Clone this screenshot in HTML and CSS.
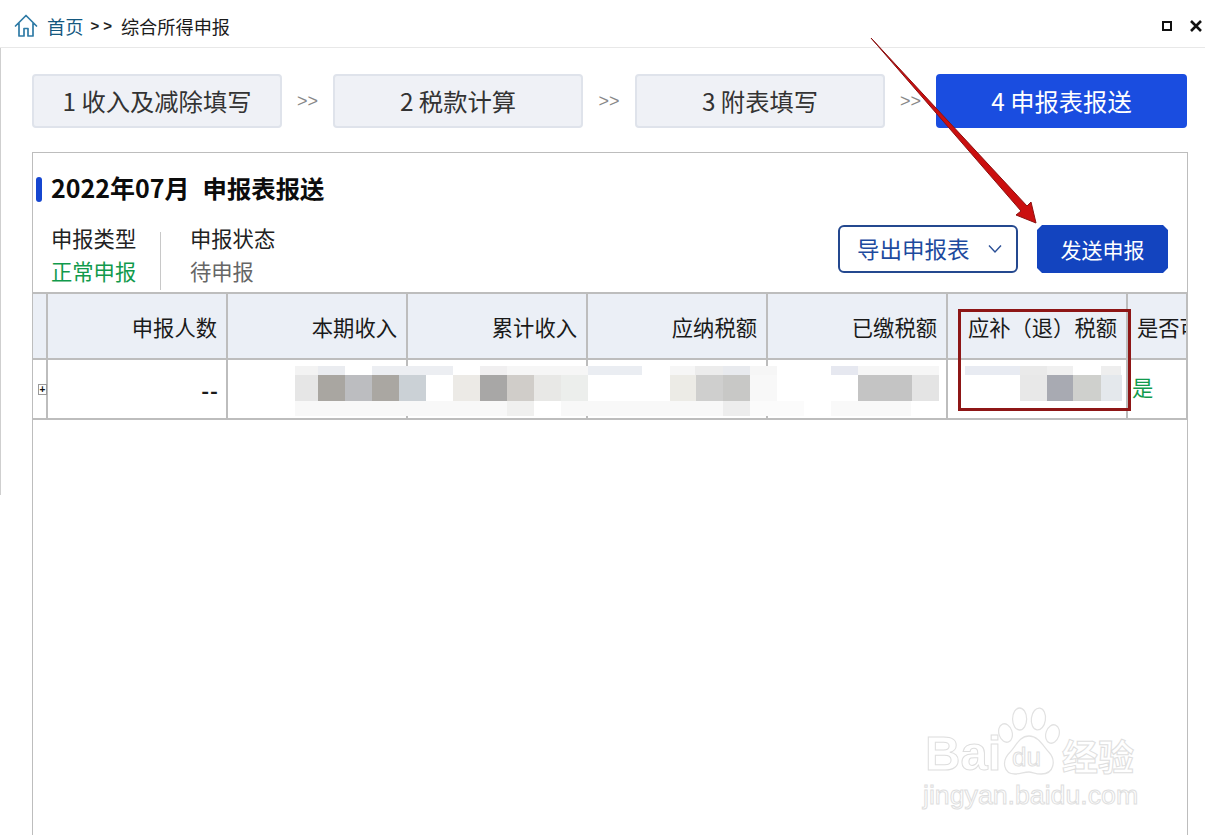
FILE: index.html
```html
<!DOCTYPE html>
<html lang="zh-CN">
<head>
<meta charset="utf-8">
<title>综合所得申报</title>
<link rel="stylesheet" href="styles.css">
</head>
<body>
<div class="app">
  <header class="topbar">
    <div class="crumbs">
      <svg class="home" viewBox="0 0 24 24" width="24" height="24"><path d="M1.5 12 L12 1.5 L22.5 12 M5 9.5 V22 H10 V14.5 H14 V22 H19 V9.5" fill="none" stroke="#2f7ba6" stroke-width="1.7" stroke-linejoin="round" stroke-linecap="round"/></svg>
      <a class="crumb-link">首页</a>
      <span class="crumb-sep">&gt;&gt;</span>
      <span class="crumb-now">综合所得申报</span>
    </div>
    <div class="winctl">
      <span class="win-max"></span>
      <svg class="win-close" viewBox="0 0 14 14" width="14" height="14"><path d="M2 2 L12 12 M12 2 L2 12" stroke="#111" stroke-width="2.6"/></svg>
    </div>
  </header>

  <main class="content">
    <nav class="steps">
      <div class="step">1 收入及减除填写</div>
      <div class="step-sep">&gt;&gt;</div>
      <div class="step">2 税款计算</div>
      <div class="step-sep step-sep-wide">&gt;&gt;</div>
      <div class="step">3 附表填写</div>
      <div class="step-sep">&gt;&gt;</div>
      <div class="step step-active">4 申报表报送</div>
    </nav>

    <section class="panel">
      <h1 class="title"><span class="title-bar"></span><span class="title-date">2022年07月</span><span class="title-name">申报表报送</span></h1>
      <div class="info">
        <div class="meta">
          <div class="meta-item meta-first">
            <div class="meta-label">申报类型</div>
            <div class="meta-value value-green">正常申报</div>
          </div>
          <div class="meta-item">
            <div class="meta-label">申报状态</div>
            <div class="meta-value value-gray">待申报</div>
          </div>
        </div>
        <div class="actions">
          <button class="btn-export"><span class="btn-export-text">导出申报表</span>
            <svg viewBox="0 0 14 10" width="14" height="10"><path d="M1 1.5 L7 8 L13 1.5" fill="none" stroke="#2a4f96" stroke-width="1.4"/></svg>
          </button>
          <button class="btn-send">发送申报</button>
        </div>
      </div>
      <table class="grid">
        <colgroup>
          <col class="col-exp"><col class="col-num"><col class="col-num"><col class="col-num"><col class="col-num"><col class="col-num"><col class="col-num"><col class="col-last">
        </colgroup>
        <thead>
          <tr>
            <th></th><th>申报人数</th><th>本期收入</th><th>累计收入</th><th>应纳税额</th><th>已缴税额</th><th>应补（退）税额</th><th class="cell-left"><span class="clip">是否可</span></th>
          </tr>
        </thead>
        <tbody>
          <tr>
            <td class="cell-exp"><span class="expander">+</span></td><td><span class="dash">--</span></td><td></td><td></td><td></td><td></td><td></td><td class="cell-yes">是</td>
          </tr>
        </tbody>
      </table>
    </section>
  </main>

  <svg class="overlay" viewBox="0 0 1205 835" width="1205" height="835">
    <g fill="#f8f8f8">
      <rect x="295" y="401" width="212" height="15"/><rect x="507" y="401" width="27" height="15" fill="#f0f0ef"/><rect x="561" y="401" width="27" height="15"/>
      <rect x="588" y="401" width="135" height="15"/><rect x="723" y="401" width="27" height="15" fill="#ededed"/><rect x="750" y="401" width="54" height="15" fill="#fbfbfb"/>
      <rect x="831" y="401" width="80" height="15" fill="#f9f9f9"/>
    </g>
    <g fill="#f3f3f3">
      <rect x="295" y="366" width="23" height="9"/><rect x="318" y="366" width="27" height="9" fill="#eaecf0"/><rect x="372" y="366" width="81" height="9" fill="#eceef2"/>
      <rect x="480" y="366" width="27" height="9" fill="#f0eff0"/><rect x="507" y="366" width="81" height="9" fill="#f6f6f6"/>
      <rect x="588" y="366" width="54" height="9" fill="#eaedf2"/><rect x="670" y="366" width="25" height="9" fill="#f6f6f6"/><rect x="695" y="366" width="28" height="9" fill="#ececec"/><rect x="723" y="366" width="27" height="9" fill="#e8eaee"/><rect x="750" y="366" width="27" height="9" fill="#f6f6f6"/>
      <rect x="831" y="366" width="27" height="9" fill="#e6e8f0"/><rect x="858" y="366" width="81" height="9" fill="#f6f6f6"/>
      <rect x="965" y="366" width="55" height="9" fill="#e8ebf2"/><rect x="1020" y="366" width="27" height="9" fill="#eaeaea"/><rect x="1047" y="366" width="26" height="9" fill="#f0f0f0"/><rect x="1101" y="366" width="20" height="9" fill="#eeeeee"/>
    </g>
    <g>
      <rect x="295" y="375" width="23" height="26" fill="#e6e6e6"/><rect x="318" y="375" width="27" height="26" fill="#a9a6a1"/><rect x="345" y="375" width="27" height="26" fill="#bcbdc0"/><rect x="372" y="375" width="27" height="26" fill="#aaa7a2"/><rect x="399" y="375" width="27" height="26" fill="#cbd1d6"/>
      <rect x="453" y="375" width="27" height="26" fill="#eceae6"/><rect x="480" y="375" width="27" height="26" fill="#a8a7a6"/><rect x="507" y="375" width="27" height="26" fill="#d0cdc9"/><rect x="534" y="375" width="27" height="26" fill="#e8e8e6"/><rect x="561" y="375" width="27" height="26" fill="#eceeec"/>
      <rect x="670" y="375" width="26" height="26" fill="#ecebe6"/><rect x="696" y="375" width="27" height="26" fill="#cfcfce"/><rect x="723" y="375" width="27" height="26" fill="#c8c8c6"/><rect x="750" y="375" width="27" height="26" fill="#f8f8f8"/>
      <rect x="858" y="375" width="54" height="26" fill="#c4c4c4"/><rect x="912" y="375" width="27" height="26" fill="#e4e4e4"/>
      <rect x="1020" y="375" width="27" height="26" fill="#e8e8e8"/><rect x="1047" y="375" width="26" height="26" fill="#a8aab2"/><rect x="1073" y="375" width="28" height="26" fill="#cfd0cd"/><rect x="1101" y="375" width="21" height="26" fill="#e4e8ec"/>
    </g>
    <rect x="959.5" y="310.5" width="170" height="99" fill="none" stroke="#8e1616" stroke-width="3"/>
    <path d="M871 38 L1027 206 L1031 202 L1036 223 L1016 215 L1021 211 Z" fill="#cb0f0f" stroke="#8a1212" stroke-width="1" stroke-linejoin="round"/>
  </svg>

  <div class="watermark">
    <div class="wm-top">
      <span class="wm-bai">Bai</span>
      <span class="wm-paw">
        <svg viewBox="0 0 66 72" width="62" height="72" preserveAspectRatio="none">
          <g fill="#fff" stroke="#e2e2e2" stroke-width="1.3">
            <ellipse cx="8" cy="27" rx="7" ry="9.5" transform="rotate(-20 8 27)"/>
            <ellipse cx="23" cy="13" rx="7.5" ry="11"/>
            <ellipse cx="43" cy="13" rx="7.5" ry="11" transform="rotate(8 43 13)"/>
            <ellipse cx="58" cy="28" rx="7" ry="9.5" transform="rotate(20 58 28)"/>
            <path d="M33 30 C43 30 48 40 54 46 C62 54 60 68 46 68 C39 68 37 66 33 66 C27 66 25 68 18 68 C6 68 3 55 13 46 C19 40 23 30 33 30 Z"/>
          </g>
        </svg>
        <span class="wm-du">du</span>
      </span>
      <span class="wm-cn">经验</span>
    </div>
    <div class="wm-url">jingyan.baidu.com</div>
  </div>
</div>
</body>
</html>
```

FILE: styles.css
```css
* { box-sizing: border-box; }
html, body { margin: 0; padding: 0; background: #fff; }
body { font-family: "Noto Sans CJK SC", "Liberation Sans", sans-serif; color: #222; }

.app {
  position: relative;
  width: 1205px;
  height: 835px;
  overflow: hidden;
  display: flex;
  flex-direction: column;
}
.app::before {
  content: "";
  position: absolute;
  left: 0;
  top: 48px;
  width: 1px;
  height: 447px;
  background: #cfcfcf;
}

.topbar {
  height: 48px;
  flex: none;
  display: flex;
  align-items: center;
  justify-content: space-between;
  padding: 5px 2px 0 14px;
  border-bottom: 1px solid #e8e8e8;
}
.crumbs { display: flex; align-items: center; font-size: 18.2px; line-height: 24px; }
.home { margin-right: 9px; }
.crumb-link { color: #14587f; }
.crumb-sep { margin: 0 5px 0 7px; font-family: "Liberation Sans", sans-serif; font-weight: 700; font-size: 15px; letter-spacing: 4px; color: #222; }
.crumb-now { color: #1b1b1b; }
.winctl { display: flex; align-items: center; gap: 17px; }
.win-max { width: 10px; height: 10px; border: 2px solid #111; }

.content { flex: 1; display: flex; flex-direction: column; padding: 26px 17px 0 32px; min-height: 0; }

.steps { display: flex; height: 54px; flex: none; }
.step {
  width: 250px;
  display: flex;
  align-items: center;
  justify-content: center;
  padding-bottom: 2px;
  background: #eff1f6;
  border: 2px solid #dfe3eb;
  border-radius: 4px;
  font-size: 24.3px;
  color: #333;
}
.step-active { width: 251px; background: #1a4de0; border-color: #1a4de0; color: #fff; }
.step-sep {
  width: 51px;
  display: flex;
  align-items: center;
  justify-content: center;
  font-family: "Liberation Sans", sans-serif;
  font-size: 18px;
  color: #888;
}
.step-sep-wide { width: 52px; }

.panel {
  flex: 1;
  margin-top: 24px;
  border: 1px solid #bdbdbd;
  border-bottom: 0;
  min-height: 0;
  overflow: hidden;
}
.title {
  margin: 23px 0 0;
  height: 26px;
  display: flex;
  align-items: center;
  padding-left: 3px;
  font-weight: 700;
  color: #0c0c0c;
  white-space: nowrap;
}
.title-bar { width: 6px; height: 25px; border-radius: 3px; background: #1546d0; margin-right: 9px; }
.title-date { font-size: 25px; padding-bottom: 4px; margin-right: 13px; }
.title-name { font-size: 24.4px; padding-bottom: 4px; }

.info { display: flex; justify-content: space-between; margin-top: 22px; height: 68px; padding-right: 19px; }
.meta { display: flex; margin-top: -5px; }
.meta-item { height: 63px; }
.meta-first { padding-left: 18px; width: 128px; border-right: 1px solid #c8c8c8; margin-top: 13px; height: 58px; }
.meta-first .meta-label { margin-top: -11px; }
.meta-item:not(.meta-first) { padding-left: 29px; padding-top: 2px; }
.meta-label { font-size: 21.3px; line-height: 33px; color: #222; }
.meta-value { font-size: 21.3px; line-height: 33px; }
.value-green { color: #119a4c; }
.value-gray { color: #666; }

.actions { display: flex; gap: 19px; height: 48px; margin-top: 1px; }
.btn-export {
  width: 180px;
  height: 48px;
  border: 2px solid #24488f;
  border-radius: 6px;
  background: #fff;
  padding: 0 14px 0 17px;
  display: flex;
  align-items: center;
  justify-content: space-between;
  font: inherit;
  font-size: 22.5px;
  color: #1d4a9e;
}
.btn-export-text { padding-bottom: 3px; }
.btn-send {
  width: 131px;
  height: 48px;
  border: 0;
  background: #1344bf;
  clip-path: polygon(5px 0, calc(100% - 5px) 0, 100% 5px, 100% calc(100% - 5px), calc(100% - 5px) 100%, 5px 100%, 0 calc(100% - 5px), 0 5px);
  font: inherit;
  font-size: 21px;
  color: #fff;
}

.grid {
  table-layout: fixed;
  width: 1155px;
  border-collapse: collapse;
  margin-left: -2px;
}
.col-exp { width: 15px; }
.col-num { width: 180px; }
.col-last { width: 60px; }
.grid th, .grid td {
  border: 2px solid #bdbdbd;
  padding: 0 9px 0 0;
  text-align: right;
  font-size: 21.3px;
  font-weight: 400;
  color: #1a1a1a;
  overflow: hidden;
  white-space: nowrap;
}
.grid th { height: 66px; padding-top: 1px; background: #ebeff6; }
.grid td { height: 60px; background: #fff; }
.grid .cell-left { text-align: left; padding: 1px 0 0 9px; }
.clip { display: block; overflow: hidden; }
.dash { font-weight: 700; letter-spacing: 1px; margin-right: -2px; }
.grid .cell-yes { text-align: left; padding: 0 0 5px 4px; color: #119a4c; }
.grid .cell-exp { padding: 0; overflow: visible; position: relative; }
.expander {
  position: absolute;
  right: -1px;
  top: 24px;
  width: 9px;
  height: 11px;
  border: 1px solid #999;
  background: #fff;
  font: 700 10px/9px "Liberation Sans", sans-serif;
  text-align: center;
  color: #111;
}

.overlay { position: absolute; left: 0; top: 0; pointer-events: none; }

.watermark { position: absolute; left: 925px; top: 706px; width: 220px; }
.wm-top { display: flex; align-items: flex-end; height: 72px; }
.wm-bai, .wm-du, .wm-cn, .wm-url {
  color: #fff;
  -webkit-text-stroke: 1px #dedede;
}
.wm-bai { font: 700 49px/1 "Liberation Sans", sans-serif; width: 70px; }
.wm-paw { position: relative; width: 62px; height: 72px; flex: none; margin: 0 2px 0 3px; }
.wm-du { position: absolute; left: 14px; top: 38px; font: 400 26px/1 "Liberation Sans", sans-serif; }
.wm-cn { font-size: 36px; line-height: 40px; font-weight: 700; padding-bottom: 3px; }
.wm-url { font: 400 26.7px/30px "Liberation Sans", sans-serif; margin: 2px 0 0 -2px; white-space: nowrap; }
```
